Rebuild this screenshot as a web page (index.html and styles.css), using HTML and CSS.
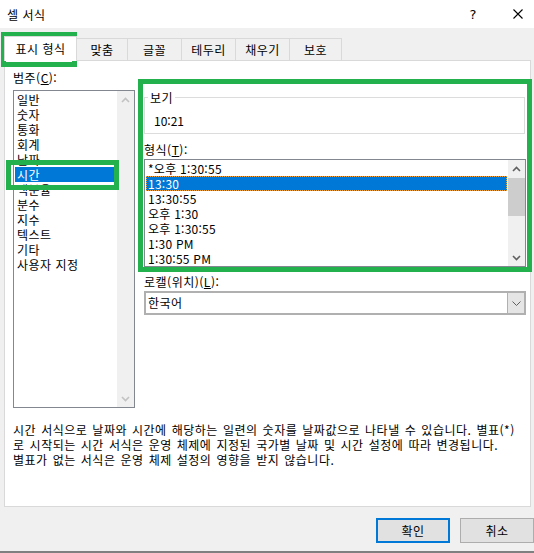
FILE: index.html
```html
<!DOCTYPE html>
<html lang="ko">
<head>
<meta charset="utf-8">
<title>셀 서식</title>
<link rel="stylesheet" href="styles.css">
</head>
<body>
<div class="window">
  <div class="titlebar">
    <span class="title">셀 서식</span>
    <span class="help">?</span>
    <span class="close"><svg width="10" height="10" viewBox="0 0 10 10"><path d="M0.5 0.5 L9.5 9.5 M9.5 0.5 L0.5 9.5" stroke="#000" stroke-width="1.1" fill="none"/></svg></span>
  </div>

  <div class="tabs">
    <div class="tab active">표시 형식</div>
    <div class="tab w51">맞춤</div>
    <div class="tab w54">글꼴</div>
    <div class="tab w54">테두리</div>
    <div class="tab w54">채우기</div>
    <div class="tab w52">보호</div>
  </div>

  <div class="panel">
    <div class="panel-row">
      <div class="col-left">
        <div class="label">범주(<u>C</u>):</div>
        <div class="listbox cat">
          <div class="items">
            <div class="item">일반</div>
            <div class="item">숫자</div>
            <div class="item">통화</div>
            <div class="item">회계</div>
            <div class="item">날짜</div>
            <div class="item sel">시간</div>
            <div class="item">백분율</div>
            <div class="item">분수</div>
            <div class="item">지수</div>
            <div class="item">텍스트</div>
            <div class="item">기타</div>
            <div class="item">사용자 지정</div>
          </div>
          <div class="vscroll disabled">
            <div class="sb-btn"><svg width="9" height="6" viewBox="0 0 9 6"><path d="M1 5 L4.5 1.5 L8 5" stroke="#c2c2c2" stroke-width="1.6" fill="none"/></svg></div>
            <div class="sb-track"></div>
            <div class="sb-btn"><svg width="9" height="6" viewBox="0 0 9 6"><path d="M1 1 L4.5 4.5 L8 1" stroke="#c2c2c2" stroke-width="1.6" fill="none"/></svg></div>
          </div>
        </div>
      </div>

      <div class="col-right">
        <fieldset class="sample">
          <legend>보기</legend>
          <div class="sample-value">10:21</div>
        </fieldset>

        <div class="label gap8">형식(<u>T</u>):</div>
        <div class="listbox fmt">
          <div class="items">
            <div class="item">*오후 1:30:55</div>
            <div class="item sel focus">13:30</div>
            <div class="item">13:30:55</div>
            <div class="item">오후 1:30</div>
            <div class="item">오후 1:30:55</div>
            <div class="item">1:30 PM</div>
            <div class="item">1:30:55 PM</div>
          </div>
          <div class="vscroll">
            <div class="sb-btn"><svg width="9" height="6" viewBox="0 0 9 6"><path d="M1 5 L4.5 1.5 L8 5" stroke="#606060" stroke-width="1.6" fill="none"/></svg></div>
            <div class="sb-track"><div class="thumb"></div></div>
            <div class="sb-btn"><svg width="9" height="6" viewBox="0 0 9 6"><path d="M1 1 L4.5 4.5 L8 1" stroke="#606060" stroke-width="1.6" fill="none"/></svg></div>
          </div>
        </div>

        <div class="label gap7">로캘(위치)(<u>L</u>):</div>
        <div class="combo">
          <span class="combo-text">한국어</span>
          <span class="combo-btn"><svg width="9" height="5" viewBox="0 0 9 5"><path d="M0.5 0.5 L4.5 4.5 L8.5 0.5" stroke="#606060" stroke-width="1" fill="none"/></svg></span>
        </div>
      </div>
    </div>

    <p class="desc">시간 서식으로 날짜와 시간에 해당하는 일련의 숫자를 날짜값으로 나타낼 수 있습니다. 별표(*)<br>로 시작되는 시간 서식은 운영 체제에 지정된 국가별 날짜 및 시간 설정에 따라 변경됩니다.<br>별표가 없는 서식은 운영 체제 설정의 영향을 받지 않습니다.</p>
  </div>

  <div class="footer">
    <button class="btn default">확인</button>
    <button class="btn">취소</button>
  </div>

  <div class="mark mark-tab"></div>
  <div class="mark mark-cat"></div>
  <div class="mark mark-right"></div>
</div>
</body>
</html>
```

FILE: styles.css
```css
html, body {
  margin: 0;
  padding: 0;
  background: #f0f0f0;
}

body {
  font-family: "Noto Sans CJK KR", "Noto Sans", sans-serif;
  font-size: 12px;
  letter-spacing: 0.5px;
  color: #000;
}

.window {
  position: relative;
  width: 534px;
  height: 553px;
  box-sizing: border-box;
  overflow: hidden;
  background: #f0f0f0;
  border-bottom: 2px solid #808080;
}

/* title bar */
.titlebar {
  height: 28px;
  background: #fff;
  display: flex;
  align-items: center;
}

.title {
  flex: 1;
  padding-left: 7px;
  line-height: 15px;
}

.help {
  width: 20px;
  margin-right: 25px;
  text-align: center;
  font-family: "DejaVu Sans", sans-serif;
  font-size: 13px;
  line-height: 15px;
  letter-spacing: 0;
}

.close {
  width: 20px;
  margin-right: 6px;
  display: flex;
  justify-content: center;
  align-items: center;
}

/* tabs */
.tabs {
  display: flex;
  align-items: flex-end;
  height: 25px;
  margin-top: 8px;
  padding-left: 4px;
  position: relative;
  z-index: 1;
}

.tab {
  box-sizing: border-box;
  height: 22px;
  margin-bottom: 1px;
  border-top: 1px solid #d9d9d9;
  border-right: 1px solid #d9d9d9;
  line-height: 21px;
  text-align: center;
  white-space: nowrap;
}

.tab.active {
  width: 73px;
  height: 25px;
  margin-bottom: 0;
  padding-top: 1px;
  line-height: 22px;
  background: #fff;
  border-left: 1px solid #d9d9d9;
}

.w51 { width: 51px; }
.w52 { width: 52px; }
.w54 { width: 54px; }

/* panel */
.panel {
  box-sizing: border-box;
  width: 527px;
  height: 447px;
  margin: -1px 0 0 4px;
  padding: 9px 0 0 8px;
  background: #fff;
  border: 1px solid #d9d9d9;
}

.panel-row {
  display: flex;
  align-items: flex-start;
}

.col-left {
  width: 122px;
}

.col-right {
  width: 382px;
  margin-left: 9px;
}

.label {
  height: 15px;
  line-height: 15px;
  white-space: nowrap;
}

.gap8 { margin-top: 8px; }
.gap7 { margin-top: 7px; }

/* list boxes */
.listbox {
  box-sizing: border-box;
  display: flex;
  background: #fff;
  border: 1px solid #828790;
}

.listbox.cat {
  margin-top: 5px;
  height: 318px;
}

.listbox.fmt {
  margin-top: 2px;
  height: 108px;
}

.items {
  flex: 1;
  padding: 1px;
  overflow: hidden;
}

.item {
  box-sizing: border-box;
  height: 15px;
  line-height: 15px;
  padding-left: 2px;
  white-space: nowrap;
}

.fmt .item {
  letter-spacing: 0.25px;
}

.item.sel {
  background: #0078d7;
  color: #fff;
}

.item.focus {
  outline: 1px dotted #f2a33a;
  outline-offset: -1px;
}

/* scrollbars */
.vscroll {
  width: 17px;
  display: flex;
  flex-direction: column;
  background: #f0f0f0;
}

.sb-btn {
  height: 17px;
  display: flex;
  align-items: center;
  justify-content: center;
}

.sb-track {
  flex: 1;
}

.thumb {
  height: 38px;
  margin-top: 1px;
  background: #cdcdcd;
}

/* sample group */
.sample {
  box-sizing: border-box;
  width: 381px;
  margin: 20px 0 0 0;
  padding: 8px 9px 5px 9px;
  border: 1px solid #dcdcdc;
  min-width: 0;
}

.sample legend {
  margin-left: -6px;
  padding: 0 2px;
  line-height: 15px;
}

.sample-value {
  line-height: 15px;
  letter-spacing: 0;
}

/* combo box */
.combo {
  box-sizing: border-box;
  height: 24px;
  margin-top: 2px;
  display: flex;
  align-items: stretch;
  background: #fff;
  border: 2px solid #b0b0b0;
}

.combo-text {
  flex: 1;
  padding-left: 2px;
  line-height: 20px;
}

.combo-btn {
  width: 16px;
  display: flex;
  align-items: center;
  justify-content: center;
  background: #e5e5e5;
  border-left: 1px solid #b0b0b0;
}

/* description */
.desc {
  margin: 14px 0 0 0;
  line-height: 15px;
  word-spacing: 1.2px;
  white-space: nowrap;
}

/* footer buttons */
.footer {
  display: flex;
  justify-content: flex-end;
  gap: 10px;
  padding-top: 11px;
}

.btn {
  box-sizing: border-box;
  width: 74px;
  height: 25px;
  padding: 0;
  background: #e1e1e1;
  border: 1px solid #adadad;
  font: inherit;
  letter-spacing: 0.5px;
  color: #000;
  line-height: 15px;
}

.btn.default {
  border: 2px solid #0078d7;
}

/* green annotation boxes */
.mark {
  position: absolute;
  box-sizing: border-box;
  border: 5px solid #22b14c;
  pointer-events: none;
}

.mark-tab {
  left: 1px;
  top: 32px;
  width: 76px;
  height: 35px;
}

.mark-cat {
  left: 6px;
  top: 160px;
  width: 113px;
  height: 30px;
}

.mark-right {
  left: 138px;
  top: 79px;
  width: 394px;
  height: 193px;
}
```
